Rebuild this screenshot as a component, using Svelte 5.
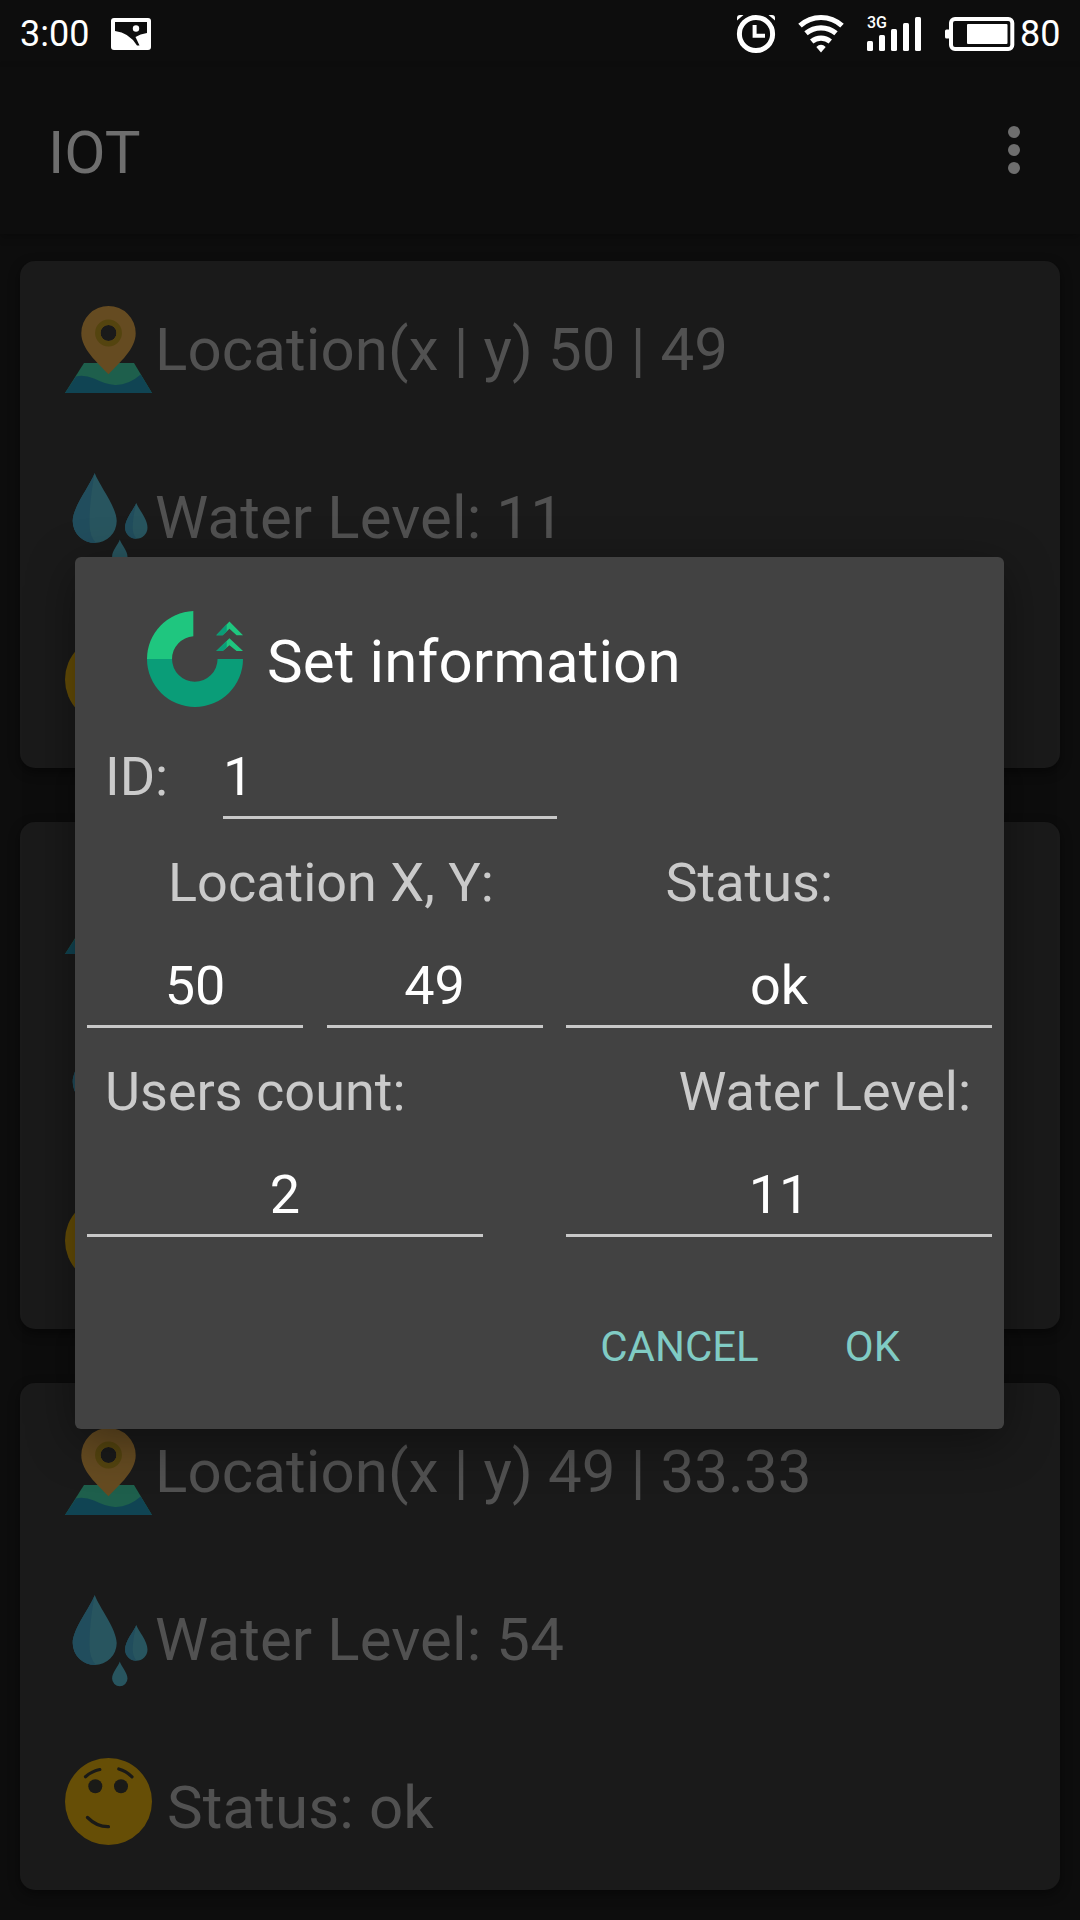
<script>
  // Rows lying wholly under the dialog carry no value and draw only their icon.
  const cards = [
    { location: '50 | 49', water: '11', status: '' },
    { location: '', water: '', status: '' },
    { location: '49 | 33.33', water: '54', status: 'ok' },
  ];
  const bars = [10, 16, 22, 28, 34];
</script>

<div class="screen">
  <div class="statusbar">
    <span class="clock">3:00</span>
    <svg class="picture" width="40" height="32" viewBox="0 0 40 32">
      <rect width="40" height="32" rx="3" fill="#fff" />
      <path d="M4 4H36V15Q29 16 24.5 19L28.500 27.500H26Q18 14.500 4 13Z" fill="#0d0d0d" />
      <circle cx="25" cy="10.500" r="3.200" fill="#fff" />
    </svg>
    <span class="grow"></span>
    <svg class="alarm" width="40" height="40" viewBox="0 0 40 40" fill="none" stroke="#fff">
      <circle cx="20" cy="20" r="16.600" stroke-width="5" />
      <path d="M18.600 11V21.800H29" stroke-width="4" />
      <path d="M1 6.500V4Q1 1 4 1H7.500ZM39 6.500V4Q39 1 36 1H32.500Z" fill="#fff" stroke="none" />
    </svg>
    <svg class="wifi" width="46" height="40" viewBox="0 0 46 40" fill="none" stroke="#fff" stroke-width="5.200">
      <path d="M2 11.700A31 31 0 0 1 44 11.700" />
      <path d="M8 19.200A23.500 23.500 0 0 1 38 19.200" />
      <path d="M13.700 27.500A14.500 14.500 0 0 1 32.300 27.500" />
      <path d="M18.300 33Q23 28.500 27.700 33L23 38.500Z" fill="#fff" stroke="none" />
    </svg>
    <div class="signal">
      <span class="net">3G</span>
      {#each bars as h}
        <i style:height="{h}px"></i>
      {/each}
    </div>
    <svg class="battery" width="70" height="34" viewBox="0 0 70 34">
      <rect x="6" y="2" width="61.300" height="30" rx="4" fill="none" stroke="#fff" stroke-width="4" />
      <rect x="0" y="12.500" width="5" height="9" rx="1.500" fill="#fff" />
      <rect x="22" y="7" width="40.500" height="20" rx="1" fill="#fff" />
    </svg>
    <span class="percent">80</span>
  </div>

  <header class="appbar">
    <h1>IOT</h1>
    <div class="more"><i></i><i></i><i></i></div>
  </header>

  <main>
    {#each cards as card}
      <section class="card">
        <div class="row">
          <svg width="90" height="87" viewBox="0 0 90 87">
            <path d="M19 57H69L87 87H0Z" fill="#1e5f4c" />
            <path d="M11 70.500Q19 68.500 29 72.500Q40 78 50 79Q63 79.500 75.700 68.500L87 87H0Z" fill="#104453" />
            <path fill-rule="evenodd" d="M43.500 0A27.200 27.200 0 0 1 70.700 27.200C70.700 43 55 56 43.500 68.300C32 56 16.300 43 16.300 27.200A27.200 27.200 0 0 1 43.500 0ZM43.500 19A8 8 0 1 0 43.500 35A8 8 0 1 0 43.500 19Z" fill="#654b21" />
            <circle cx="43.500" cy="27" r="10.700" fill="none" stroke="#54440f" stroke-width="5.400" />
          </svg>
          {#if card.location}<span>Location(x | y) {card.location}</span>{/if}
        </div>
        <div class="row">
          <svg class="drops" width="90" height="92" viewBox="0 0 90 92">
            <path d="M29.700 0C34 12 51.700 34 51.700 48A22 22 0 0 1 7.700 48C7.700 34 25.500 12 29.700 0Z" fill="#28555f" />
            <path d="M29.700 0C25.500 12 7.700 34 7.700 48A22 22 0 0 0 31 70Q24 63 24.500 48Q24.500 28 29.700 0Z" fill="#214d5d" />
            <path d="M71.300 30C73.500 36 82.500 46 82.500 54.500A11.200 11.200 0 0 1 60.100 54.500C60.100 46 69 36 71.300 30Z" fill="#28555f" />
            <path d="M71.300 30C69 36 60.100 46 60.100 54.500A11.200 11.200 0 0 0 71.500 65.700Q67.500 61 67.700 54Q67.800 44 71.300 30Z" fill="#214d5d" />
            <path d="M54.800 66.500C56 71 62.500 77.500 62.500 83.500A7.700 7.700 0 0 1 47.100 83.500C47.100 77.500 53.500 71 54.800 66.500Z" fill="#28555f" />
          </svg>
          {#if card.water}<span>Water Level: {card.water}</span>{/if}
        </div>
        <div class="row state">
          <svg class="face" width="90" height="87" viewBox="0 0 90 87">
            <circle cx="43.500" cy="43.500" r="43.500" fill="#664e06" />
            <circle cx="30.300" cy="28.300" r="7" fill="#1a1a17" />
            <circle cx="56" cy="28.300" r="7" fill="#1a1a17" />
            <path d="M20.500 18.700Q27 13 34.800 11.500M53.800 11Q61 13 67 18.800M22.500 59.500Q32 69 43.500 68.700" fill="none" stroke="#1a1a17" stroke-width="3.200" stroke-linecap="round" />
          </svg>
          {#if card.status}<span>Status: {card.status}</span>{/if}
        </div>
      </section>
    {/each}
  </main>

  <div class="dialog" role="dialog" aria-label="Set information">
    <div class="title">
      <svg width="96" height="96" viewBox="0 0 97 97">
        <path d="M0 48.500A48.500 48.500 0 0 1 46.800 0V25.500A23 23 0 0 0 25.300 48.500Z" fill="#1fc67f" />
        <path d="M0 48.500H25.300A23 23 0 0 0 71.300 48.500H97A48.500 48.500 0 0 1 0 48.500Z" fill="#0a9d78" />
        <g fill="#1fc67f">
          <path d="M83.300 10.500L97 24.500H90.500L83.300 18L76.500 24.500H70Z" />
          <path d="M83.300 27.500L97 40.500H90.500L83.300 34.500L76.500 40.500H70Z" />
        </g>
        <g fill="#0a9d78">
          <path d="M80.500 13.500V20.500L76.500 24.500H70Z" />
          <path d="M80.500 30.300V37L76.500 40.500H70Z" />
        </g>
      </svg>
      <h2>Set information</h2>
    </div>

    <div class="idrow">
      <span class="label">ID:</span>
      <div class="field id">1</div>
    </div>

    <div class="labels">
      <span class="label loc">Location X, Y:</span>
      <span class="label stat">Status:</span>
    </div>
    <div class="fields">
      <div class="field">50</div>
      <div class="field">49</div>
      <div class="field wide">ok</div>
    </div>

    <div class="labels">
      <span class="label users">Users count:</span>
      <span class="label level">Water Level:</span>
    </div>
    <div class="fields second">
      <div class="field count">2</div>
      <div class="field wide">11</div>
    </div>

    <div class="actions">
      <button>CANCEL</button>
      <button>OK</button>
    </div>
  </div>
</div>

<style>
  :global(body) {
    margin: 0;
    background: #0d0d0d;
  }
  .screen {
    position: relative;
    width: 1080px;
    height: 1920px;
    overflow: hidden;
    background: #0d0d0d;
    font-family: Roboto, 'Liberation Sans', sans-serif;
    color: #fff;
  }
  svg {
    display: block;
    flex: none;
  }
  .grow {
    flex: 1;
  }
  .statusbar {
    display: flex;
    align-items: center;
    height: 67px;
    padding: 0 19px 0 20px;
    box-sizing: border-box;
    font-size: 36px;
    line-height: 67px;
  }
  .clock,
  .percent {
    padding-top: 1px;
  }
  .clock {
    width: 91px;
  }
  .alarm {
    margin-right: 22px;
  }
  .wifi {
    margin-right: 23px;
  }
  .signal {
    position: relative;
    display: flex;
    align-items: flex-end;
    gap: 6px;
    height: 34px;
    margin-right: 24px;
  }
  .signal i {
    width: 6px;
    border-radius: 1.5px;
    background: #fff;
  }
  .net {
    position: absolute;
    left: 0;
    top: -1px;
    font-size: 16px;
    line-height: 14px;
    font-weight: 500;
  }
  .percent {
    width: 41px;
    margin-left: 5px;
  }
  .appbar {
    display: flex;
    align-items: center;
    justify-content: space-between;
    height: 167px;
    padding: 0 60px 1px 48px;
    box-sizing: border-box;
    color: #6e6e6e;
    box-shadow: 0 3px 8px rgba(0, 0, 0, 0.25);
  }
  h1,
  h2 {
    margin: 0;
    padding-top: 5px;
    font-size: 60px;
    line-height: 72px;
    font-weight: 400;
  }
  h2 {
    padding-top: 6px;
    letter-spacing: 0.12px;
  }
  .more {
    display: grid;
    gap: 6px;
  }
  .more i {
    width: 12px;
    height: 12px;
    border-radius: 50%;
    background: #6e6e6e;
  }
  main {
    display: flex;
    flex-direction: column;
    gap: 54px;
    padding: 27px 20px 30px;
  }
  .card {
    height: 507px;
    padding: 4px 45px 0;
    box-sizing: border-box;
    border-radius: 15px;
    background: #1a1a1a;
    box-shadow: 0 4px 12px rgba(0, 0, 0, 0.45);
    font-size: 60px;
    letter-spacing: 0.12px;
    color: #515151;
  }
  .row {
    display: flex;
    align-items: center;
    height: 168px;
    line-height: 72px;
    white-space: nowrap;
  }
  .row span {
    padding-top: 2px;
  }
  .drops {
    margin-top: 4px;
  }
  .face {
    margin-bottom: 12px;
  }
  .state span {
    margin-left: 12px;
  }
  .dialog {
    position: absolute;
    left: 75px;
    top: 557px;
    width: 929px;
    height: 872px;
    padding: 48px 12px 0;
    box-sizing: border-box;
    border-radius: 6px;
    background: #424242;
    box-shadow: 0 12px 48px rgba(0, 0, 0, 0.4);
  }
  .title {
    display: flex;
    align-items: center;
    gap: 24px;
    height: 108px;
    padding-left: 60px;
    margin-bottom: 24px;
  }
  .label {
    font-size: 54px;
    line-height: 64px;
    color: #cacaca;
    white-space: nowrap;
  }
  .field {
    width: 216px;
    height: 79px;
    border-bottom: 3px solid #c8c8c8;
    font-size: 54px;
    line-height: 79px;
    text-align: center;
  }
  .idrow {
    display: flex;
    justify-content: space-between;
    padding: 0 435px 0 18px;
  }
  .idrow .label {
    line-height: 79px;
  }
  .field.id {
    width: 334px;
    text-align: left;
  }
  .labels {
    display: flex;
    align-items: center;
    justify-content: space-between;
    height: 127px;
    padding: 0 21px 0 18px;
  }
  .loc {
    padding-left: 63px;
  }
  .stat {
    padding-right: 138px;
  }
  .fields {
    display: flex;
    justify-content: space-between;
  }
  .field.wide {
    width: 426px;
  }
  .field.count {
    width: 396px;
  }
  .actions {
    display: flex;
    justify-content: flex-end;
    gap: 86px;
    margin-top: 56px;
    padding-right: 92px;
  }
  button {
    padding: 0;
    border: 0;
    background: none;
    color: #80cbc4;
    font: 400 42px/108px Roboto, 'Liberation Sans', sans-serif;
  }
</style>
